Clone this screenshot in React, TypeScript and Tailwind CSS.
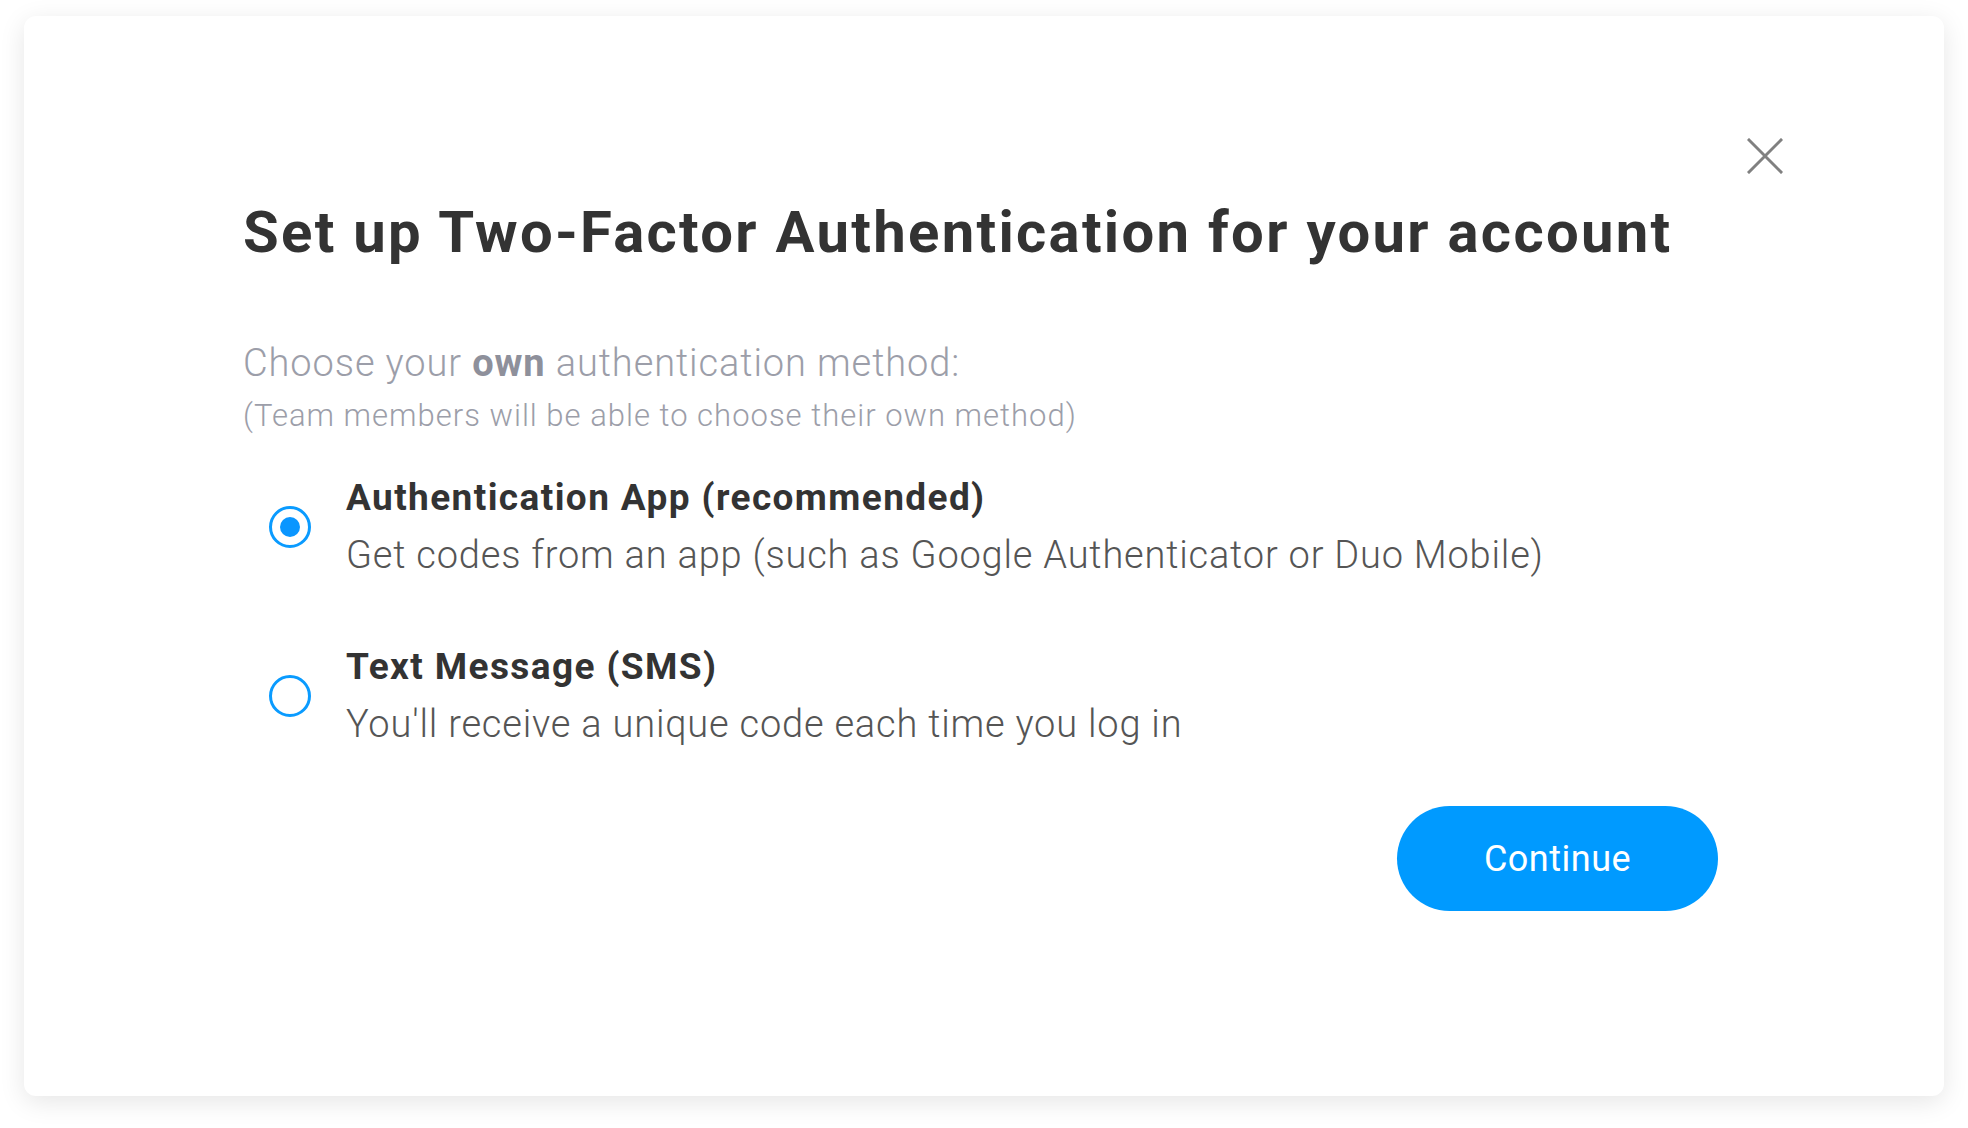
const options = [
  {
    id: "app",
    title: "Authentication App (recommended)",
    description:
      "Get codes from an app (such as Google Authenticator or Duo Mobile)",
  },
  {
    id: "sms",
    title: "Text Message (SMS)",
    description: "You'll receive a unique code each time you log in",
  },
];

function Radio({ checked }: { checked: boolean }) {
  return (
    <span className="flex h-[42px] w-[42px] shrink-0 items-center justify-center rounded-full border-[3px] border-[#0a9bff] bg-white">
      {checked && <span className="h-[20px] w-[20px] rounded-full bg-[#0a96ff]" />}
    </span>
  );
}

export default function App() {
  const selected = "app";

  return (
    <div className="min-h-screen bg-white font-['Roboto','Liberation_Sans',sans-serif]">
      <div className="pl-[24px] pt-[16px]">
        <div className="relative h-[1080px] w-[1920px] rounded-[12px] bg-white shadow-[0_6px_26px_rgba(0,0,0,0.10)]">
          {/* Close */}
          <button className="absolute right-[161px] top-[122px] flex h-[36px] w-[36px] items-center justify-center">
            <svg width="36" height="36" viewBox="0 0 36 36">
              <path
                d="M2 2 L34 34 M34 2 L2 34"
                stroke="#808080"
                strokeWidth="3"
                strokeLinecap="square"
              />
            </svg>
          </button>

          <div className="flex flex-col pl-[219px] pr-[226px] pt-[182px]">
            <h1 className="text-[58px] font-bold leading-[68px] tracking-[2.3px] text-[#333333]">
              Set up Two-Factor Authentication for your account
            </h1>

            <p className="mt-[75px] text-[38px] font-light leading-[44px] tracking-[0.9px] text-[#9c9ea9]">
              Choose your <span className="font-bold text-[#8e909b]">own</span>{" "}
              authentication method:
            </p>
            <p className="mt-[13px] text-[31px] font-light leading-[36px] tracking-[1px] text-[#9c9ea9]">
              (Team members will be able to choose their own method)
            </p>

            <div className="mt-[43px] flex flex-col gap-[69px]">
              {options.map((opt) => (
                <label key={opt.id} className="flex items-center gap-[35px] pl-[26px]">
                  <Radio checked={opt.id === selected} />
                  <div className="flex flex-col gap-[14px]">
                    <span className="text-[37px] font-bold leading-[42px] tracking-[1.4px] text-[#333333]">
                      {opt.title}
                    </span>
                    <span className="text-[38px] font-light leading-[44px] tracking-[0.8px] text-[#555555]">
                      {opt.description}
                    </span>
                  </div>
                </label>
              ))}
            </div>

            <div className="mt-[60px] flex justify-end">
              <button className="flex h-[105px] w-[321px] items-center justify-center rounded-full bg-[#009aff] text-[36px] font-normal tracking-[0.5px] text-white">
                Continue
              </button>
            </div>
          </div>
        </div>
      </div>
    </div>
  );
}
